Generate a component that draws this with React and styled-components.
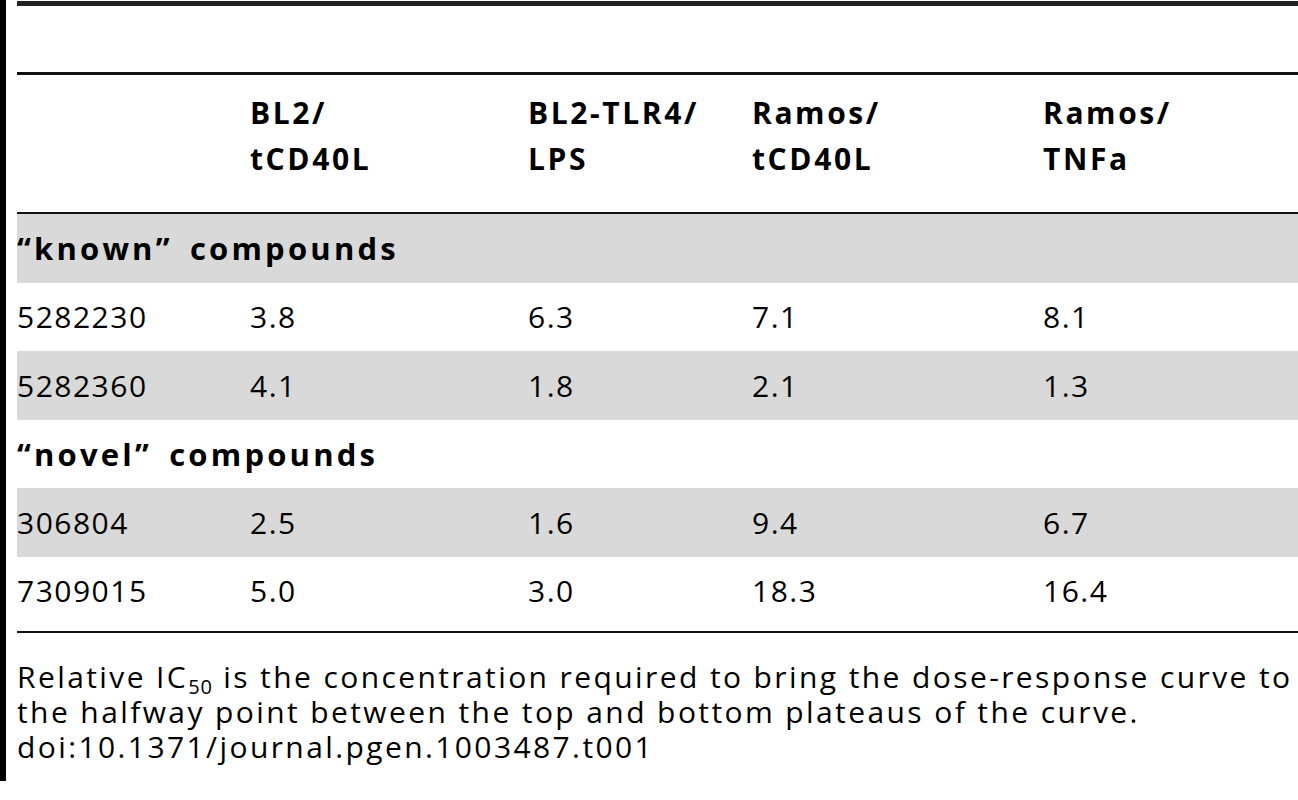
import React from 'react';
import styled, { createGlobalStyle } from 'styled-components';

const GlobalStyle = createGlobalStyle`
  body {
    margin: 0;
    background: #fff;
    color: #000;
    font-family: "Open Sans", "Noto Sans", sans-serif;
  }
`;

const Figure = styled.div`
  border-left: 6px solid #000;
  padding: 1px 0 17px 11px;
`;

const Rule = styled.div`
  height: ${p => p.$size}px;
  background: ${p => p.$color || '#111'};
`;

const TitleSpace = styled.div`
  height: 66px;
`;

const Row = styled.div`
  display: grid;
  grid-template-columns: 233px 278px 224px 291px 1fr;
  align-items: center;
  height: 68.5px;
  font-size: 30px;
  letter-spacing: 1.5px;
  background: ${p => (p.$shade ? '#d9d9d9' : '#fff')};
`;

const HeadRow = styled(Row)`
  height: 137px;
  align-items: start;
  padding-top: 15px;
  box-sizing: border-box;
  font-weight: 700;
  line-height: 46px;
  letter-spacing: 2.6px;
`;

const SectionRow = styled(Row)`
  font-size: 31px;
  font-weight: 700;
  letter-spacing: 3.2px;
  word-spacing: 6px;
`;

const Cell = styled.div`
  white-space: nowrap;
`;

const Body = styled.div`
  padding-bottom: 6px;
`;

const Caption = styled.p`
  margin: 26px 0 0;
  font-size: 30px;
  line-height: 35px;
  letter-spacing: 2.4px;
  white-space: nowrap;
`;

const Sub = styled.sub`
  font-size: 20px;
  line-height: 0;
  letter-spacing: 1px;
  vertical-align: -6px;
`;

const columns = [
  ['BL2/', 'tCD40L'],
  ['BL2-TLR4/', 'LPS'],
  ['Ramos/', 'tCD40L'],
  ['Ramos/', 'TNFa'],
];

const groups = [
  {
    label: '\u201cknown\u201d compounds',
    rows: [
      ['5282230', '3.8', '6.3', '7.1', '8.1'],
      ['5282360', '4.1', '1.8', '2.1', '1.3'],
    ],
  },
  {
    label: '\u201cnovel\u201d compounds',
    rows: [
      ['306804', '2.5', '1.6', '9.4', '6.7'],
      ['7309015', '5.0', '3.0', '18.3', '16.4'],
    ],
  },
];

export default function App() {
  let stripe = 0;
  return (
    <>
      <GlobalStyle />
      <Figure>
        <Rule $size={5} $color="#222" />
        <TitleSpace />
        <Rule $size={3} />
        <HeadRow>
          <Cell />
          {columns.map(([a, b], i) => (
            <Cell key={i}>
              {a}
              <br />
              {b}
            </Cell>
          ))}
        </HeadRow>
        <Rule $size={2} />
        <Body>
          {groups.map(g => {
            const rows = [
              <SectionRow key={g.label} $shade={stripe++ % 2 === 0}>
                <Cell>{g.label}</Cell>
              </SectionRow>,
            ];
            g.rows.forEach(r => {
              rows.push(
                <Row key={r[0]} $shade={stripe++ % 2 === 0}>
                  {r.map((v, i) => (
                    <Cell key={i}>{v}</Cell>
                  ))}
                </Row>
              );
            });
            return rows;
          })}
        </Body>
        <Rule $size={2} />
        <Caption>
          Relative IC<Sub>50</Sub> is the concentration required to bring the dose-response curve to
          <br />
          the halfway point between the top and bottom plateaus of the curve.
          <br />
          doi:10.1371/journal.pgen.1003487.t001
        </Caption>
      </Figure>
    </>
  );
}
